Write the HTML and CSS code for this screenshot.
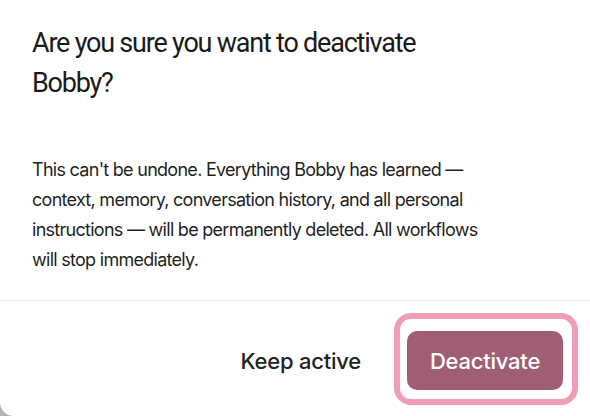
FILE: index.html
```html
<!DOCTYPE html>
<html lang="en">
<head>
<meta charset="utf-8">
<title>Deactivate Bobby</title>
<link rel="stylesheet" href="styles.css">
</head>
<body>
<div class="dialog" role="alertdialog" aria-labelledby="dlg-title">
  <div class="dialog-body">
    <h2 class="dialog-title" id="dlg-title">Are you sure you want to deactivate Bobby?</h2>
    <p class="dialog-text">This can't be undone. Everything Bobby has learned — context, memory, conversation history, and all personal instructions — will be permanently deleted. All workflows will stop immediately.</p>
  </div>
  <div class="dialog-footer">
    <button class="btn btn-ghost" type="button">Keep active</button>
    <button class="btn btn-danger is-focused" type="button">Deactivate</button>
  </div>
</div>
</body>
</html>
```

FILE: styles.css
```css
html, body {
  margin: 0;
  padding: 0;
}
body {
  width: 590px;
  height: 416px;
  overflow: hidden;
  background: #b5b5b5;
  font-family: "Inter", "Noto Sans", sans-serif;
  color: #1c1c1c;
}
.dialog {
  width: 590px;
  height: 416px;
  background: #ffffff;
  border-bottom-left-radius: 14px;
  display: flex;
  flex-direction: column;
}
.dialog-body {
  padding: 23px 32px 25px 32px;
  border-bottom: 1px solid #e7ecdc;
}
.dialog-title {
  margin: 0 0 52px 0;
  font-family: "Roboto", "Inter", sans-serif;
  font-size: 27px;
  line-height: 40px;
  font-weight: 400;
  letter-spacing: -0.045em;
  color: #1a1a1a;
  max-width: 440px;
}
.dialog-text {
  margin: 0;
  font-size: 18px;
  line-height: 30px;
  font-weight: 400;
  letter-spacing: -0.04em;
  color: #1f1f1f;
  max-width: 462px;
}
.dialog-footer {
  display: flex;
  justify-content: flex-end;
  align-items: center;
  gap: 22px;
  padding: 30px 27px 0 32px;
}
.btn {
  font-family: inherit;
  font-size: 22px;
  font-weight: 500;
  letter-spacing: -0.01em;
  border: none;
  cursor: pointer;
  height: 59px;
  border-radius: 10px;
}
.btn-ghost {
  background: transparent;
  color: #222222;
  padding: 0 24px;
}
.btn-danger {
  position: relative;
  background: #a05e75;
  color: #ffffff;
  width: 156px;
  padding: 0;
}
.btn-danger.is-focused::after {
  content: "";
  position: absolute;
  top: -18px;
  left: -13px;
  right: -15px;
  bottom: -15px;
  border: 6px solid #f19db5;
  border-radius: 17px;
  pointer-events: none;
}
```
